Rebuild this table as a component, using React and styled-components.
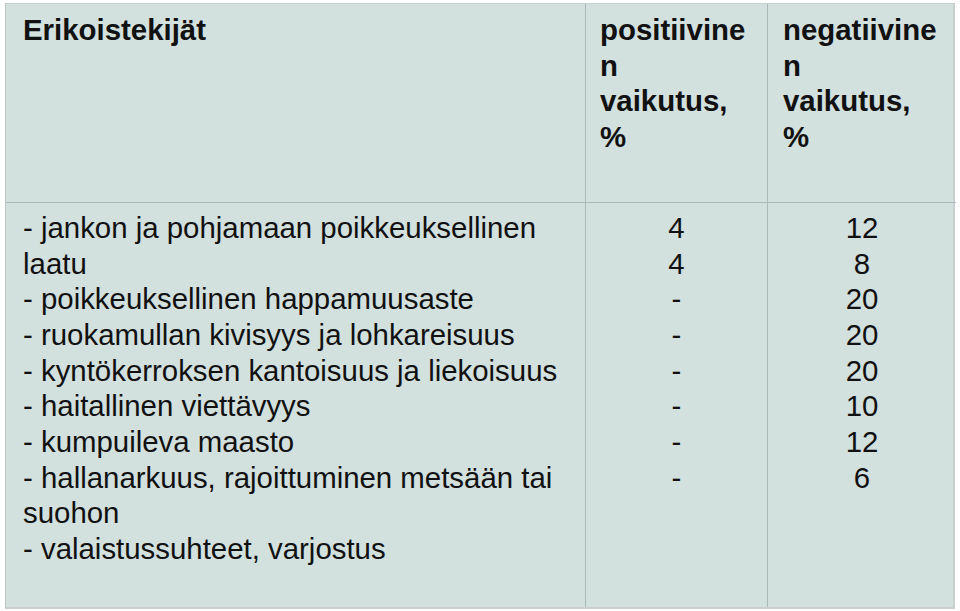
import styled, { createGlobalStyle } from "styled-components";

const GlobalStyle = createGlobalStyle`
  html, body {
    margin: 0;
    padding: 0;
    background: #ffffff;
  }
`;

const Page = styled.div`
  width: 960px;
  height: 611px;
  padding: 3px 5px 2px 5px;
  box-sizing: border-box;
  background: #ffffff;
`;

const Table = styled.div`
  display: grid;
  grid-template-columns: 580px 182px 188px;
  grid-template-rows: 199px 1fr;
  height: 100%;
  background: #d2e0de;
  border-left: 1px solid #b9c6c4;
  border-top: 1px solid #c3cfcd;
  border-right: 2px solid #c8cfce;
  border-bottom: 2px solid #c8cfce;
  box-sizing: border-box;
  font-family: "Liberation Sans", Arial, Helvetica, sans-serif;
  font-size: 29.4px;
  line-height: 35.67px;
  color: #111111;
`;

const Cell = styled.div`
  box-sizing: border-box;
  padding: ${(p) => (p.$head ? "8px" : "7px")} 0 0 ${(p) => p.$pad || 16}px;
  border-right: ${(p) => (p.$last ? "none" : "1px solid #a9bab8")};
  border-bottom: ${(p) => (p.$head ? "1px solid #a9bab8" : "none")};
  font-weight: ${(p) => (p.$head ? 700 : 400)};
  text-align: ${(p) => (p.$center ? "center" : "left")};
  ${(p) => p.$center && "padding-left: 0;"}
`;

const Line = styled.div`
  white-space: nowrap;
`;

const factors = [
  "- jankon ja pohjamaan poikkeuksellinen",
  "laatu",
  "- poikkeuksellinen happamuusaste",
  "- ruokamullan kivisyys ja lohkareisuus",
  "- kyntökerroksen kantoisuus ja liekoisuus",
  "- haitallinen viettävyys",
  "- kumpuileva maasto",
  "- hallanarkuus, rajoittuminen metsään tai",
  "suohon",
  "- valaistussuhteet, varjostus",
];

const positive = ["4", "4", "-", "-", "-", "-", "-", "-"];
const negative = ["12", "8", "20", "20", "20", "10", "12", "6"];

export default function App() {
  return (
    <>
      <GlobalStyle />
      <Page>
        <Table>
          <Cell $head $pad={17}>
            <Line>Erikoistekijät</Line>
          </Cell>
          <Cell $head $pad={14}>
            <Line>positiivine</Line>
            <Line>n</Line>
            <Line>vaikutus,</Line>
            <Line>%</Line>
          </Cell>
          <Cell $head $last $pad={15}>
            <Line>negatiivine</Line>
            <Line>n</Line>
            <Line>vaikutus,</Line>
            <Line>%</Line>
          </Cell>

          <Cell $pad={17}>
            {factors.map((t, i) => (
              <Line key={i}>{t}</Line>
            ))}
          </Cell>
          <Cell $center>
            {positive.map((t, i) => (
              <Line key={i}>{t}</Line>
            ))}
          </Cell>
          <Cell $center $last>
            {negative.map((t, i) => (
              <Line key={i}>{t}</Line>
            ))}
          </Cell>
        </Table>
      </Page>
    </>
  );
}
